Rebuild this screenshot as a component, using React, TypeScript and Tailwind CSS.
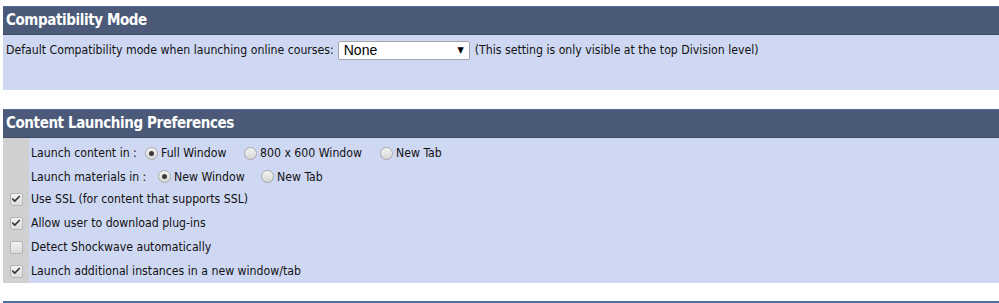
import { Check } from 'lucide-react';

const font = { fontFamily: '"DejaVu Sans Condensed", "DejaVu Sans", Verdana, sans-serif' };

const Radio = ({ on }: { on?: boolean }) => (
  <span className="inline-flex items-center justify-center w-[13px] h-[13px] rounded-full border border-[#a9a9a9] bg-gradient-to-b from-[#f4f4f4] to-[#d6d6d6] mr-[3px]">
    {on && <span className="w-[5px] h-[5px] rounded-full bg-[#3a3a3a]" />}
  </span>
);

const Box = ({ on }: { on?: boolean }) => (
  <span className="inline-flex items-center justify-center w-[13px] h-[13px] rounded-[2px] border border-[#b4b4b4] bg-gradient-to-b from-[#f2f2f2] to-[#dcdcdc]">
    {on && <Check className="w-[10px] h-[10px] text-[#333]" strokeWidth={4} />}
  </span>
);

const SectionHeader = ({ title }: { title: string }) => (
  <div className="h-[29px] bg-[#4b5a79] border-t border-[#52699a] border-b border-b-[#3d4a63] flex items-center px-[3px]">
    <span className="text-white font-bold text-[15px] tracking-[-0.4px]" style={font}>{title}</span>
  </div>
);

const checks = [
  { label: 'Use SSL (for content that supports SSL)', on: true },
  { label: 'Allow user to download plug-ins', on: true },
  { label: 'Detect Shockwave automatically', on: false },
  { label: 'Launch additional instances in a new window/tab', on: true },
];

export default function App() {
  return (
    <div className="w-[999px] h-[303px] bg-white pl-[3px] pt-[6px] text-[12.2px] text-[#111]" style={font}>
      {/* Compatibility Mode */}
      <SectionHeader title="Compatibility Mode" />
      <div className="h-[55px] bg-[#cfd8f3] px-[3px] pt-[6px]">
        <div className="flex items-center h-[19px]">
          <span>Default Compatibility mode when launching online courses:</span>
          <div className="ml-[4px] w-[132px] h-[19px] bg-white border border-[#a6a6a6] rounded-[2px] flex items-center justify-between px-[5px]">
            <span className="text-[14px] text-black" style={{ fontFamily: '"Liberation Sans", Arial, sans-serif' }}>None</span>
            <span className="text-[9px] text-black">▼</span>
          </div>
          <span className="ml-[5px]">(This setting is only visible at the top Division level)</span>
        </div>
      </div>

      <div className="h-[19px]" />

      {/* Content Launching Preferences */}
      <SectionHeader title="Content Launching Preferences" />
      <div className="h-[145px] bg-[#cfd8f3] flex">
        <div className="w-[26px] bg-[#d0d0d0]" />
        <div className="flex-1 pt-[4px]">
          <div className="h-[23px] flex items-center pl-[2px]">
            <span className="w-[114px]">Launch content in :</span>
            <span className="w-[99px] flex items-center"><Radio on />Full Window</span>
            <span className="w-[136px] flex items-center"><Radio />800 x 600 Window</span>
            <span className="flex items-center"><Radio />New Tab</span>
          </div>
          <div className="h-[23px] flex items-center pl-[2px] pt-[1px]">
            <span className="w-[127px]">Launch materials in :</span>
            <span className="w-[103px] flex items-center"><Radio on />New Window</span>
            <span className="flex items-center"><Radio />New Tab</span>
          </div>
        </div>
      </div>
      <div className="-mt-[96px] h-[96px] flex flex-col">
        {checks.map((c) => (
          <div key={c.label} className="h-6 flex items-center">
            <div className="w-[26px] flex justify-center"><Box on={c.on} /></div>
            <span className="pl-[2px]">{c.label}</span>
          </div>
        ))}
      </div>

      <div className="mt-[18px] h-[2px] bg-[#4a6fa5]" />
    </div>
  );
}
